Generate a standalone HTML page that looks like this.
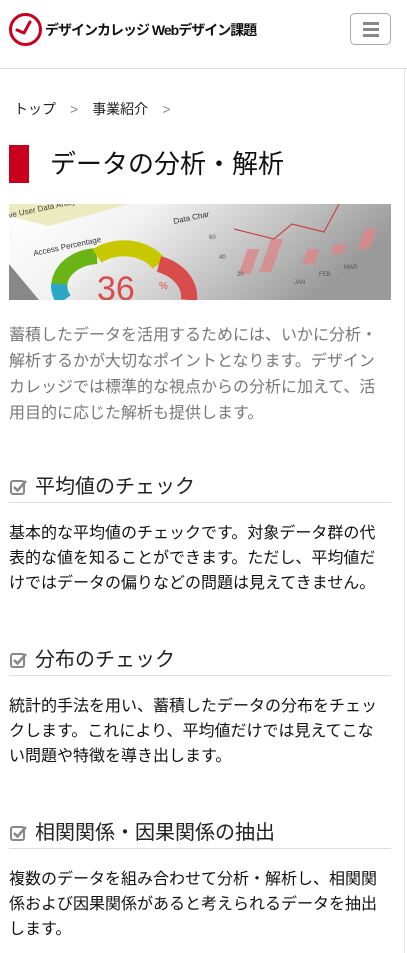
<!DOCTYPE html>
<html><head><meta charset="utf-8"><style>
*{margin:0;padding:0;box-sizing:border-box}
body{width:407px;height:953px;overflow:hidden;background:#fff;font-family:"Liberation Sans","Noto Sans CJK JP",sans-serif;color:#222;position:relative}
.hdr{height:69px;border-bottom:1px solid #ddd;position:relative}
.logo{position:absolute;left:9px;top:13px;width:33px;height:33px}
.lt{position:absolute;left:45px;top:20px;font-weight:bold;font-size:14px;letter-spacing:-1px;color:#111;white-space:nowrap}
.btn{position:absolute;left:350px;top:13px;width:41px;height:32px;border:1px solid #aaa;border-radius:5px}
.btn i{position:absolute;left:12px;width:16px;height:3px;background:#888}
.bc{position:absolute;left:14px;top:99px;font-size:14px;color:#222}
.bc span{color:#888;margin:0 14px}
.h1{position:absolute;left:9px;top:145px;height:38px;width:382px}
.h1 b{position:absolute;left:0;top:0;width:20px;height:38px;background:#c8001e}
.h1 div{position:absolute;left:41px;top:0;font-size:26px;line-height:38px;color:#111}
.img{position:absolute;left:9px;top:204px;width:382px;height:96px}
p{position:absolute;left:9px;width:373px;font-size:16px}
.intro{top:323px;line-height:26px;color:#777}
.sec{position:absolute;left:9px;width:382px;border-bottom:1px solid #ddd;height:30px;font-size:20px;line-height:28px;padding-left:26px}
.sec svg{position:absolute;left:1px;top:6px}
.body{line-height:25px;color:#111}
.sb{position:absolute;right:0;top:69px;width:3px;height:884px;border-left:1px solid #e6e6e6}
</style></head><body>
<div class="hdr">
<svg class="logo" viewBox="0 0 33 33"><circle cx="16.5" cy="16.5" r="15" fill="none" stroke="#c8001e" stroke-width="3"/><path d="M8 17 L15 20 L21 9" fill="none" stroke="#c8001e" stroke-width="3" stroke-linecap="round" stroke-linejoin="round"/></svg>
<div class="lt">デザインカレッジ Webデザイン課題</div>
<div class="btn"><i style="top:8px"></i><i style="top:14px"></i><i style="top:20px"></i></div>
</div>
<div class="sb"></div>
<div class="bc">トップ<span>&gt;</span>事業紹介<span>&gt;</span></div>
<div class="h1"><b></b><div>データの分析・解析</div></div>
<svg class="img" viewBox="0 0 382 96">
<defs><linearGradient id="g" x1="0" x2="1" y1="0" y2="0.3"><stop offset="0" stop-color="#fff"/><stop offset="0.35" stop-color="#f2f2f2"/><stop offset="0.7" stop-color="#c4c4c4"/><stop offset="1" stop-color="#9a9a9a"/></linearGradient></defs>
<rect width="382" height="96" fill="url(#g)"/>
<polygon points="0,0 120,0 40,22 0,12" fill="#ecebc0"/>
<polygon points="0,60 30,96 0,96" fill="#888"/>
<text x="0" y="14" font-size="8" fill="#444" transform="rotate(-12 0 14)">ve User Data Analy</text>
<text x="25" y="52" font-size="8" fill="#333" transform="rotate(-12 25 52)">Access Percentage</text>
<text x="165" y="20" font-size="8" fill="#333" transform="rotate(-12 165 20)">Data Char</text>
<path d="M55 96 A40 30 0 0 1 88 52" fill="none" stroke="#6ab416" stroke-width="16"/>
<path d="M88 52 A40 30 0 0 1 150 60" fill="none" stroke="#c8c800" stroke-width="16"/>
<path d="M150 60 A45 35 0 0 1 180 96" fill="none" stroke="#d94c4c" stroke-width="16"/>
<path d="M50 80 A40 30 0 0 0 55 96" fill="none" stroke="#2aa8c8" stroke-width="16"/>
<text x="88" y="96" font-size="34" fill="#d94c4c">36</text>
<text x="150" y="85" font-size="10" fill="#d94c4c">%</text>
<g fill="#d88" opacity="0.8"><rect x="255" y="45" width="12" height="25" transform="skewX(-20)"/><rect x="275" y="35" width="12" height="33" transform="skewX(-20)"/><rect x="315" y="45" width="12" height="15" transform="skewX(-20)"/><rect x="340" y="40" width="12" height="10" transform="skewX(-20)"/><rect x="365" y="25" width="12" height="20" transform="skewX(-20)"/></g>
<polyline points="225,25 265,35 283,20 315,28 330,0" fill="none" stroke="#c44" stroke-width="1.2"/>
<g fill="#555" font-size="6"><text x="200" y="35">60</text><text x="210" y="55">40</text><text x="228" y="72">20</text><text x="285" y="80">JAN</text><text x="310" y="72">FEB</text><text x="335" y="65">MAR</text></g>
</svg>
<p class="intro">蓄積したデータを活用するためには、いかに分析・解析するかが大切なポイントとなります。デザインカレッジでは標準的な視点からの分析に加えて、活用目的に応じた解析も提供します。</p>

<div class="sec" style="top:473px"><svg width="18" height="16" viewBox="0 0 18 16"><rect x="1" y="2" width="13" height="13" rx="2" fill="none" stroke="#888" stroke-width="2"/><path d="M4 8 L7.5 11.5 L16 2" fill="none" stroke="#888" stroke-width="2.5"/></svg>平均値のチェック</div>
<p class="body" style="top:521px">基本的な平均値のチェックです。対象データ群の代表的な値を知ることができます。ただし、平均値だけではデータの偏りなどの問題は見えてきません。</p>

<div class="sec" style="top:646px"><svg width="18" height="16" viewBox="0 0 18 16"><rect x="1" y="2" width="13" height="13" rx="2" fill="none" stroke="#888" stroke-width="2"/><path d="M4 8 L7.5 11.5 L16 2" fill="none" stroke="#888" stroke-width="2.5"/></svg>分布のチェック</div>
<p class="body" style="top:694px">統計的手法を用い、蓄積したデータの分布をチェックします。これにより、平均値だけでは見えてこない問題や特徴を導き出します。</p>

<div class="sec" style="top:819px"><svg width="18" height="16" viewBox="0 0 18 16"><rect x="1" y="2" width="13" height="13" rx="2" fill="none" stroke="#888" stroke-width="2"/><path d="M4 8 L7.5 11.5 L16 2" fill="none" stroke="#888" stroke-width="2.5"/></svg>相関関係・因果関係の抽出</div>
<p class="body" style="top:867px">複数のデータを組み合わせて分析・解析し、相関関係および因果関係があると考えられるデータを抽出します。</p>
</body></html>
